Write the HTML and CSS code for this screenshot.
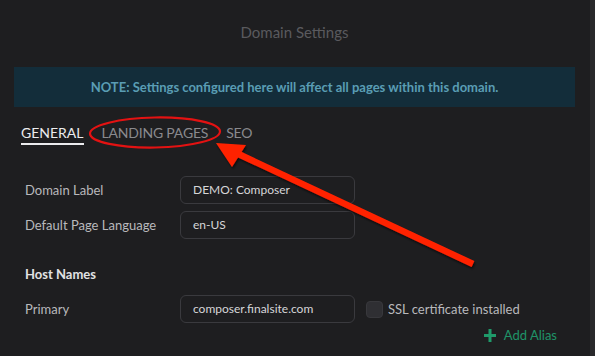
FILE: index.html
```html
<!DOCTYPE html>
<html lang="en">
<head>
    <meta charset="UTF-8">
    <meta name="viewport" content="width=device-width, initial-scale=1.0">
    <title>Domain Settings</title>
    <link rel="stylesheet" href="styles.css">
</head>
<body>
    <div class="panel">
        <h1 class="title">Domain Settings</h1>
        <div class="note">NOTE: Settings configured here will affect all pages within this domain.</div>

        <div class="tabs">
            <span class="tab active">GENERAL</span>
            <span class="tab">LANDING PAGES</span>
            <span class="tab">SEO</span>
        </div>

        <div class="form">
            <div class="row">
                <label>Domain Label</label>
                <div class="input">DEMO: Composer</div>
            </div>
            <div class="row">
                <label>Default Page Language</label>
                <div class="input">en-US</div>
            </div>

            <h2 class="section">Host Names</h2>
            <div class="row">
                <label>Primary</label>
                <div class="input">composer.finalsite.com</div>
                <span class="check"></span>
                <span class="check-label">SSL certificate installed</span>
            </div>
            <div class="add-alias">
                <svg class="plus" width="12" height="13" viewBox="0 0 12 13">
                    <path d="M6 0v13M0 6.5h12" stroke="#1f9a6a" stroke-width="3"/>
                </svg>
                Add Alias
            </div>
        </div>

        <!-- annotation drawn over the screenshot -->
        <svg class="markup" width="595" height="356" viewBox="0 0 595 356">
            <defs>
                <filter id="shadow" x="-10%" y="-10%" width="120%" height="130%">
                    <feDropShadow dx="1" dy="2" stdDeviation="1.2" flood-color="#000" flood-opacity="0.6"/>
                </filter>
            </defs>
            <ellipse cx="155" cy="132.5" rx="65" ry="15" fill="none" stroke="#e31212" stroke-width="2.2" transform="rotate(-1 155 132.5)"/>
            <g filter="url(#shadow)" fill="#ff2300">
                <line x1="473" y1="264" x2="232" y2="151" stroke="#ff2300" stroke-width="6.5"/>
                <polygon points="216,143 246,145 232,167"/>
            </g>
        </svg>
    </div>
</body>
</html>
```

FILE: styles.css
```css
* {
    margin: 0;
    padding: 0;
    box-sizing: border-box;
}

body {
    background-color: #29292b;
    font-family: Lato, "Open Sans", sans-serif;
    color: #cfcfd1;
    width: 595px;
    height: 356px;
    overflow: hidden;
}

.panel {
    position: relative;
    width: 590px;
    height: 356px;
    background-color: #1e1e20;
    padding: 0 15px 0 14px;
}

.title {
    font-size: 15px;
    font-weight: 400;
    color: #5a5a5e;
    text-align: center;
    line-height: 20px;
    padding-top: 22px;
    margin-bottom: 25px;
}

.note {
    background-color: #132d3a;
    color: #5a9db4;
    font-size: 13px;
    font-weight: 700;
    text-align: center;
    height: 40px;
    line-height: 40px;
}

.tabs {
    display: flex;
    gap: 18px;
    padding: 17px 0 0 7px;
}

.tab {
    font-size: 14px;
    color: #8a8a8e;
    line-height: 18px;
    padding-bottom: 1px;
    border-bottom: 2px solid transparent;
    letter-spacing: -0.2px;
}

.tab.active {
    color: #ececee;
    border-bottom-color: #ececee;
    letter-spacing: 0;
}

.form {
    padding: 31px 0 0 11px;
}

.row {
    display: flex;
    align-items: center;
    margin-bottom: 7px;
}

.row label {
    width: 155px;
    font-size: 13px;
    color: #b9b9bc;
}

.input {
    width: 175px;
    height: 28px;
    border: 1px solid #3a3a3e;
    border-radius: 6px;
    padding: 0 12px;
    font-size: 12px;
    line-height: 26px;
    color: #d6d6d8;
}

.section {
    font-size: 13px;
    font-weight: 700;
    color: #e2e2e4;
    margin: 27px 0 13px;
    line-height: 16px;
}

.check {
    width: 17px;
    height: 17px;
    margin-left: 11px;
    background-color: #2f2f33;
    border: 1px solid #38383c;
    border-radius: 4px;
}

.check-label {
    margin-left: 5px;
    font-size: 13px;
    color: #b9b9bc;
}

.add-alias {
    display: flex;
    align-items: center;
    justify-content: flex-end;
    gap: 8px;
    padding-right: 18px;
    margin-top: -3px;
    font-size: 13px;
    color: #1f9468;
}

.markup {
    position: absolute;
    top: 0;
    left: 0;
    pointer-events: none;
}
```
